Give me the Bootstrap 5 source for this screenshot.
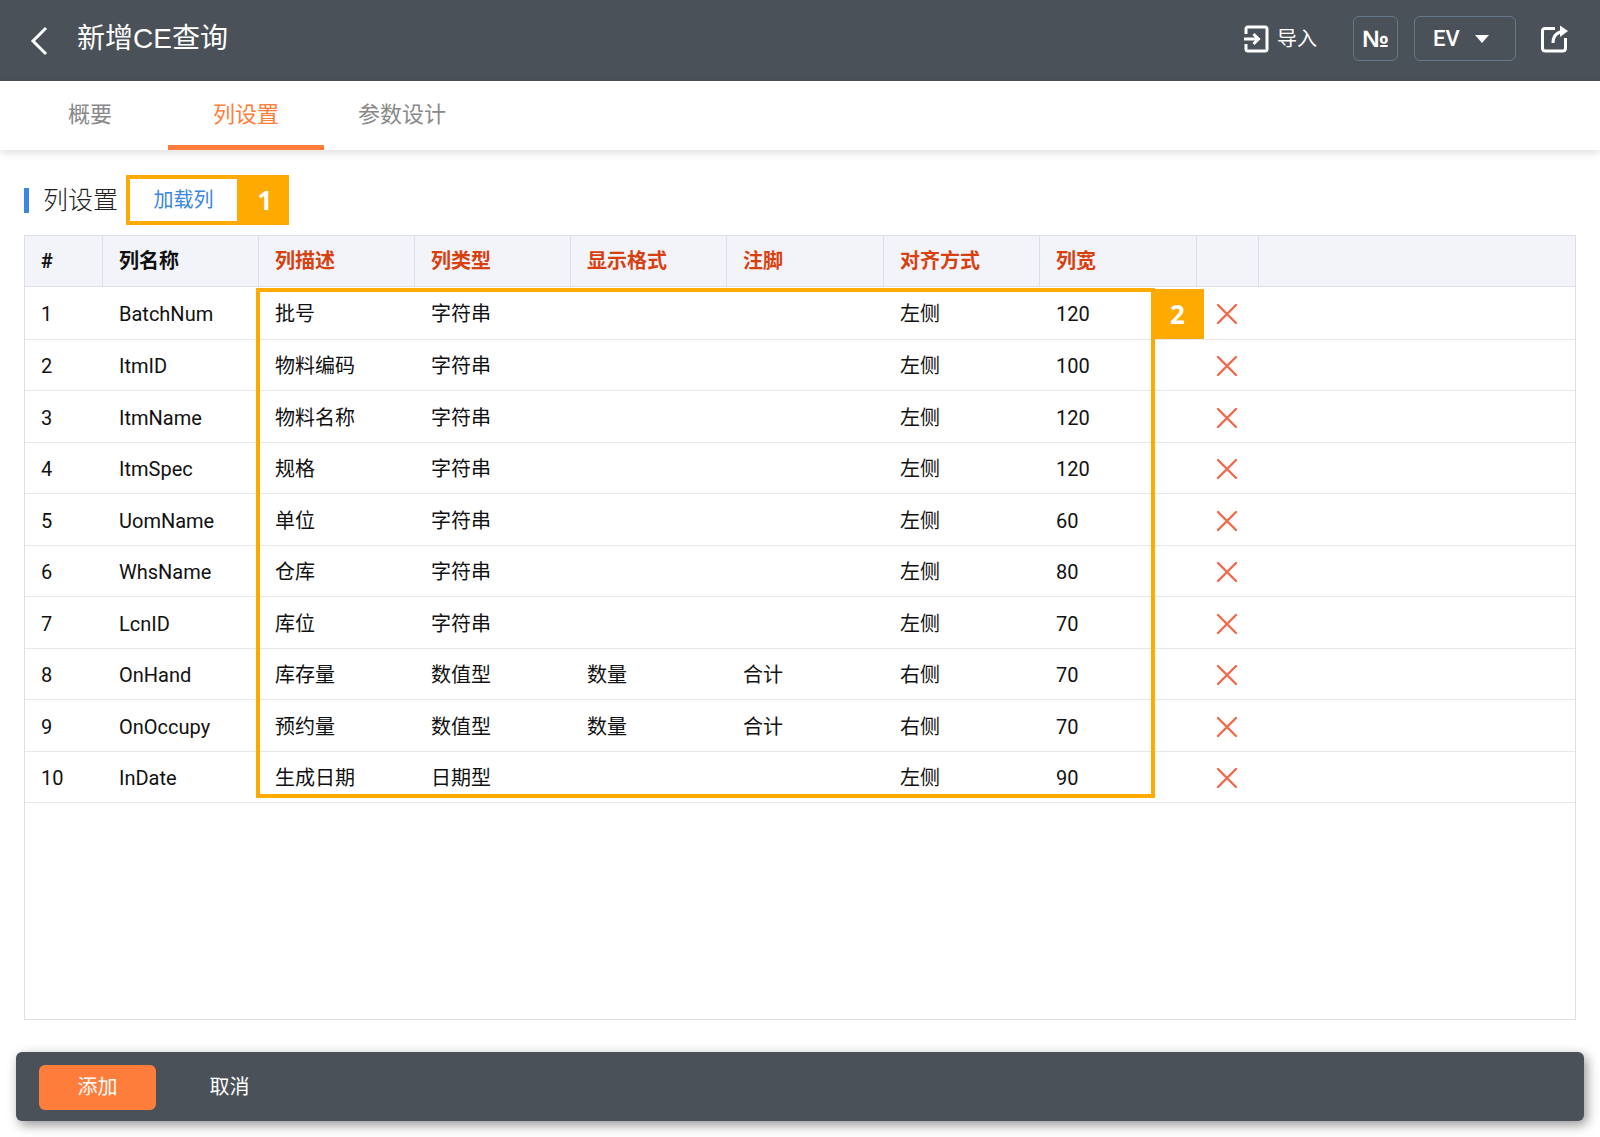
<!DOCTYPE html>
<html lang="zh-CN">
<head>
<meta charset="utf-8">
<meta name="viewport" content="width=device-width, initial-scale=1">
<title>新增CE查询</title>
<link href="https://cdn.jsdelivr.net/npm/bootstrap@5.3.0/dist/css/bootstrap.min.css" rel="stylesheet">
<style>
  :root { --slate: #4a5158; --accent: #ff7d3a; --mark: #ffaa00; --rule: #dcdfe6; }
  body { font: 20px/28px Roboto, "Noto Sans CJK SC", sans-serif; color: #111; background: #fff; }
  .topbar { background: var(--slate); color: #fff; height: 81px; padding: 0 32px 4px 24px; }
  .topbar svg { display: block; }
  .page-title { font: 28px/40px "Liberation Sans", "Noto Sans CJK SC", sans-serif; margin: 0; }
  .plain-btn { background: none; border: 0; color: inherit; padding: 0; }
  .back-btn { margin: 4px 23px 0 0; width: 30px; }
  .boxed { border: 1px solid #65788c; border-radius: 6px; height: 45px; background-color: transparent; color: #fff; }
  .num-btn { width: 45px; padding: 0; font: 700 24px/40px "Liberation Sans", sans-serif; }
  .import-btn { gap: 8px; margin-right: 36px; }
  .lang-select { width: 102px; padding: 0 0 0 18px; font-size: 22px; line-height: 40px; font-weight: 500;
    background-image: url("data:image/svg+xml,%3Csvg xmlns='http://www.w3.org/2000/svg' viewBox='0 0 14 8'%3E%3Cpath d='M0 0h14L7 8z' fill='%23fff'/%3E%3C/svg%3E");
    background-size: 14px 8px; background-position: right 26px center; }
  .lang-select option { color: #111; }
  .tabbar { height: 69px; padding-left: 12px; box-shadow: 0 3px 8px rgba(0,0,0,.13); }
  .tabbar .nav-link { width: 156px; padding: 4px 0 0; border-bottom: 5px solid transparent; font-size: 22px; line-height: 60px; text-align: center; color: #888; }
  .tabbar .nav-link.active { color: var(--accent); border-color: var(--accent); }
  .workspace { padding: 25px 24px 32px; }
  .section-head { height: 50px; margin-bottom: 10px; }
  .section-title { font-size: 25px; line-height: 25px; font-weight: 300; color: #222; margin: 0; padding: 0 8px 0 14px; border-left: 5px solid #3a86e0; }
  .callout-frame { border: 4px solid var(--mark); }
  .callout-tag { background: var(--mark); color: #fff; font: 700 26px/50px "Open Sans", sans-serif; width: 48px; text-align: center; }
  .load-btn { width: 107px; height: 42px; color: #3a86e0; }
  .grid-box { border: 1px solid var(--rule); border-top: 0; }
  .grid-table { table-layout: fixed; margin: 0; border-collapse: separate; border-spacing: 0; }
  .grid-table th, .grid-table td { padding: 2px 0 0 16px; border: 0 solid #e6e7e9; border-bottom-width: 1px; vertical-align: middle; color: #111; background: none; white-space: nowrap; }
  .grid-table th { height: 52px; padding-top: 0; background: #f2f4f9; border: 1px solid var(--rule); border-left: 0; font-weight: 700; }
  .grid-table th:last-child { border-right: 0; }
  .grid-table th.editable { color: #d9400f; }
  .grid-table tbody tr { height: 51px; }
  .grid-table tbody tr:nth-child(odd) { height: 52px; }
  .grid-table tbody tr:first-child { height: 53px; }
  .c-index { width: 78px; } .c-data { width: 156px; } .c-wide { width: 157px; } .c-act { width: 62px; }
  .del-btn, .del-btn svg { display: block; }
  .area-mark { left: 231px; top: 53px; width: 899px; height: 510px; pointer-events: none; }
  .area-mark .callout-tag { left: 100%; top: -3px; width: 53px; }
  .actionbar { margin: 0 16px 16px; height: 69px; padding: 1px 23px 0; gap: 15px; border-radius: 6px; background: var(--slate); box-shadow: 3px 4px 12px rgba(0,0,0,.42); }
  .actionbar .btn { width: 117px; height: 45px; padding: 0; font-size: 20px; color: #fff; border: 0; border-radius: 6px; }
  .actionbar .btn-add { background: var(--accent); }
</style>
<script src="https://cdn.jsdelivr.net/npm/bootstrap@5.3.0/dist/js/bootstrap.bundle.min.js"></script>
</head>
<body class="d-flex flex-column min-vh-100">
<header class="topbar d-flex align-items-center">
  <button class="plain-btn back-btn" type="button" aria-label="返回">
    <svg width="30" height="30" viewBox="0 0 30 30" fill="none" stroke="#fff" stroke-width="3"><path d="M22 2 9 15l13 13"/></svg>
  </button>
  <h1 class="page-title">新增CE查询</h1>
  <div class="d-flex align-items-center ms-auto">
    <button class="plain-btn import-btn d-flex align-items-center" type="button">
      <svg width="25" height="28" viewBox="0 0 25 28" fill="none" stroke="#fff" stroke-width="3"><path d="M2 9V4q0-2 2-2h17q2 0 2 2v20q0 2-2 2H4q-2 0-2-2v-5"/><path d="M0 14h14M9.500 9l5 5-5 5"/></svg>
      导入
    </button>
    <button class="boxed num-btn me-3" type="button">№</button>
    <select class="form-select boxed lang-select" aria-label="环境"><option>EV</option></select>
    <button class="plain-btn ms-4" type="button" aria-label="分享">
      <svg width="28" height="28" viewBox="0 0 28 28" fill="none" stroke="#fff" stroke-width="3"><path d="M15 3.500H5Q2.500 3.500 2.500 6v17q0 3 3 3h17q3 0 3-3V13"/><path d="M13 18c0-7 3-11 11-11.500"/><path d="M20 .5l8 5.500-8 6z" fill="#fff" stroke="none"/></svg>
    </button>
  </div>
</header>
<nav class="nav tabbar flex-nowrap">
  <a class="nav-link" href="#">概要</a>
  <a class="nav-link active" href="#" aria-current="page">列设置</a>
  <a class="nav-link" href="#">参数设计</a>
</nav>
<main class="workspace flex-grow-1 d-flex flex-column">
  <div class="section-head d-flex align-items-center">
    <h2 class="section-title">列设置</h2>
    <div class="callout-frame"><button class="plain-btn load-btn" type="button">加载列</button></div>
    <span class="callout-tag">1</span>
  </div>
  <div class="grid-box flex-grow-1 position-relative">
    <table class="table grid-table">
      <colgroup><col class="c-index"><col class="c-data"><col class="c-data"><col class="c-data"><col class="c-data"><col class="c-wide"><col class="c-data"><col class="c-wide"><col class="c-act"><col></colgroup>
      <thead><tr><th>#</th><th>列名称</th><th class="editable">列描述</th><th class="editable">列类型</th><th class="editable">显示格式</th><th class="editable">注脚</th><th class="editable">对齐方式</th><th class="editable">列宽</th><th></th><th></th></tr></thead>
      <tbody id="columnRows"></tbody>
    </table>
    <div class="area-mark callout-frame position-absolute"><span class="callout-tag position-absolute">2</span></div>
  </div>
</main>
<footer class="actionbar d-flex align-items-center">
  <button class="btn btn-add" type="button">添加</button>
  <button class="btn" type="button">取消</button>
</footer>
<script>
  const rows = [
    ['BatchNum', '批号', '字符串', '', '', '左侧', 120],
    ['ItmID', '物料编码', '字符串', '', '', '左侧', 100],
    ['ItmName', '物料名称', '字符串', '', '', '左侧', 120],
    ['ItmSpec', '规格', '字符串', '', '', '左侧', 120],
    ['UomName', '单位', '字符串', '', '', '左侧', 60],
    ['WhsName', '仓库', '字符串', '', '', '左侧', 80],
    ['LcnID', '库位', '字符串', '', '', '左侧', 70],
    ['OnHand', '库存量', '数值型', '数量', '合计', '右侧', 70],
    ['OnOccupy', '预约量', '数值型', '数量', '合计', '右侧', 70],
    ['InDate', '生成日期', '日期型', '', '', '左侧', 90]
  ];
  const del = '<button class="plain-btn del-btn" type="button" aria-label="删除"><svg width="28" height="28" viewBox="0 0 28 28" fill="none" stroke="#f2694a" stroke-width="2.4" stroke-linecap="round"><path d="m5 5 18 18M23 5 5 23"/></svg></button>';
  document.getElementById('columnRows').innerHTML = rows.map((r, i) =>
    `<tr><td>${i + 1}</td>${r.map(v => `<td>${v}</td>`).join('')}<td>${del}</td><td></td></tr>`).join('');
</script>
</body>
</html>
